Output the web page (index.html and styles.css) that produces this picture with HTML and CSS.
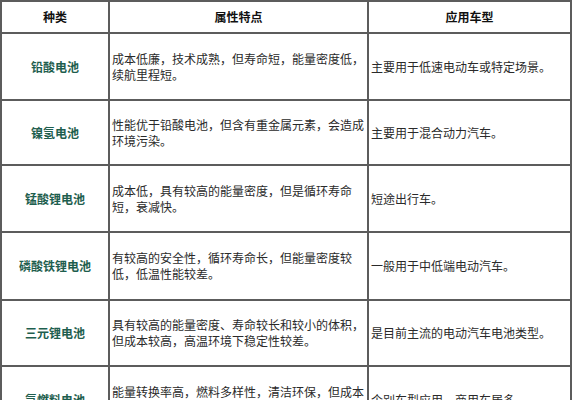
FILE: index.html
```html
<!DOCTYPE html>
<html lang="zh-CN">
<head>
<meta charset="utf-8">
<title>电池种类</title>
<link rel="stylesheet" href="styles.css">
</head>
<body>
<table class="grid">
  <colgroup>
    <col class="c-kind">
    <col class="c-attr">
    <col class="c-use">
  </colgroup>
  <tr class="r-head">
    <th>种类</th>
    <th>属性特点</th>
    <th>应用车型</th>
  </tr>
  <tr class="r-67">
    <td class="kind">铅酸电池</td>
    <td>成本低廉，技术成熟，但寿命短，能量密度低，续航里程短。</td>
    <td>主要用于低速电动车或特定场景。</td>
  </tr>
  <tr class="r-65">
    <td class="kind">镍氢电池</td>
    <td>性能优于铅酸电池，但含有重金属元素，会造成环境污染。</td>
    <td>主要用于混合动力汽车。</td>
  </tr>
  <tr class="r-67">
    <td class="kind">锰酸锂电池</td>
    <td>成本低，具有较高的能量密度，但是循环寿命短，衰减快。</td>
    <td>短途出行车。</td>
  </tr>
  <tr class="r-68">
    <td class="kind">磷酸铁锂电池</td>
    <td>有较高的安全性，循环寿命长，但能量密度较低，低温性能较差。</td>
    <td>一般用于中低端电动汽车。</td>
  </tr>
  <tr class="r-66">
    <td class="kind">三元锂电池</td>
    <td>具有较高的能量密度、寿命较长和较小的体积，但成本较高，高温环境下稳定性较差。</td>
    <td>是目前主流的电动汽车电池类型。</td>
  </tr>
  <tr class="r-67">
    <td class="kind">氢燃料电池</td>
    <td>能量转换率高，燃料多样性，清洁环保，但成本较高，技术尚不成熟。</td>
    <td>个别车型应用，商用车居多。</td>
  </tr>
</table>
</body>
</html>
```
FILE: styles.css
```css
html, body {
  margin: 0;
  padding: 0;
  background: #ffffff;
}

.grid {
  border-collapse: separate;
  border-spacing: 0;
  table-layout: fixed;
  width: 572px;
  border-left: 2px solid #5c5c5c;
  border-top: 2px solid #5c5c5c;
  font-family: "Noto Sans CJK SC", "Noto Sans", sans-serif;
  font-size: 12px;
  line-height: 16px;
  color: #2a2a2a;
}

.c-kind { width: 108px; }
.c-attr { width: 259px; }
.c-use { width: 203px; }

.grid th,
.grid td {
  border-right: 2px solid #5c5c5c;
  border-bottom: 2px solid #5c5c5c;
  padding: 0 2px;
  vertical-align: middle;
  text-align: left;
}

.grid th {
  text-align: center;
  font-weight: bold;
  color: #111111;
  font-size: 12px;
}

.grid td.kind {
  text-align: center;
  font-weight: bold;
  color: #1e5e4e;
}

.r-head { height: 32px; }
.r-65 { height: 65px; }
.r-66 { height: 66px; }
.r-67 { height: 67px; }
.r-68 { height: 68px; }
```
